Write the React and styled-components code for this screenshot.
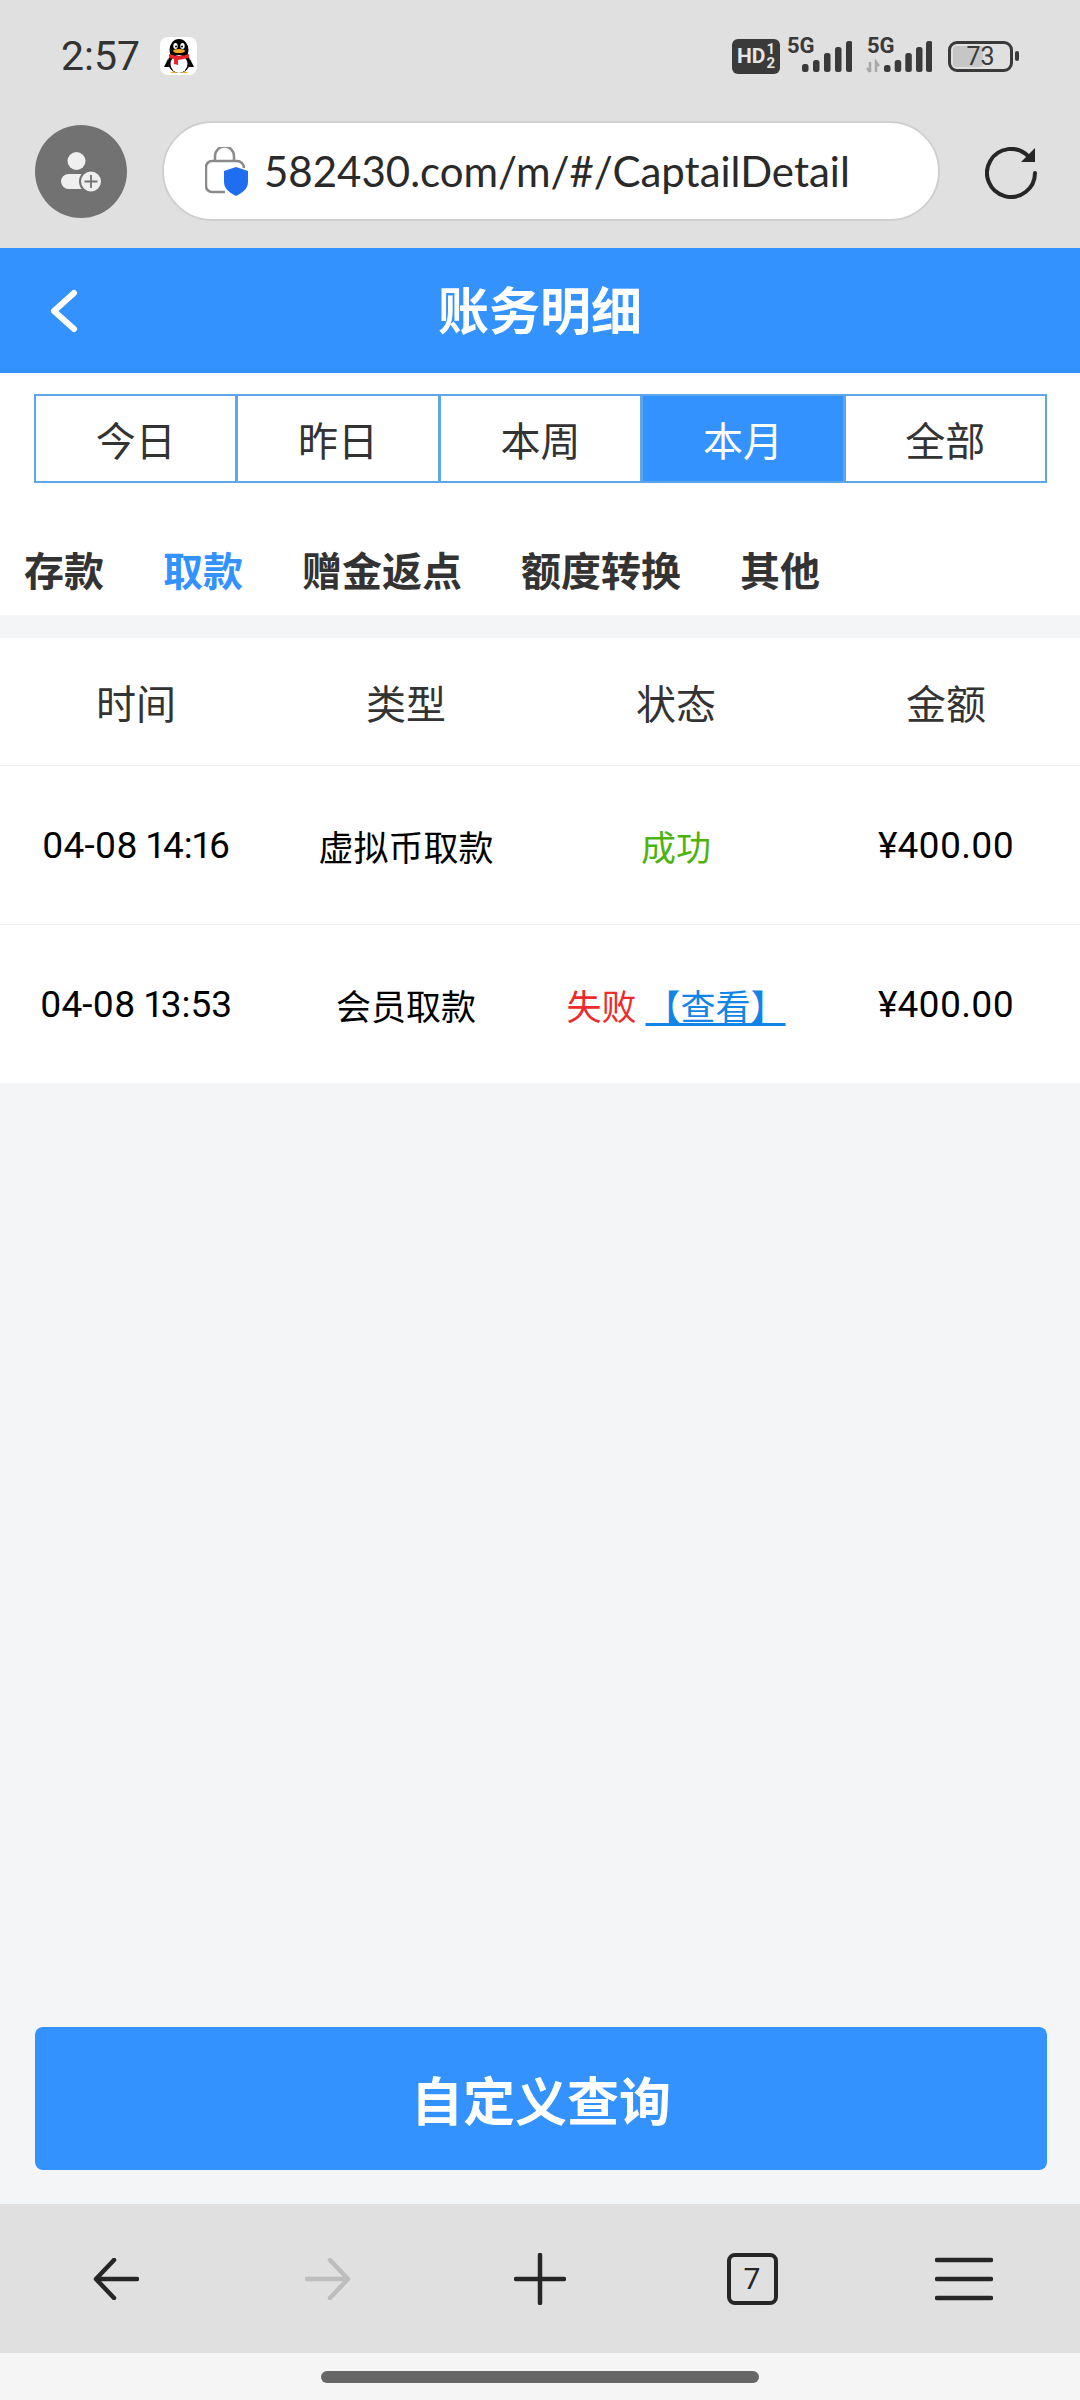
import styled, { createGlobalStyle } from "styled-components";

const GlobalStyle = createGlobalStyle`
  html, body {
    margin: 0;
    padding: 0;
    background: #f4f5f7;
  }
  * {
    box-sizing: border-box;
  }
`;

const FONT = `Roboto, "Noto Sans CJK SC", sans-serif`;

const Page = styled.div`
  width: 1080px;
  height: 2400px;
  display: flex;
  flex-direction: column;
  overflow: hidden;
  background: #f4f5f7;
  font-family: ${FONT};
`;

const StatusBar = styled.div`
  height: 112px;
  flex: none;
  padding: 0 61px;
  background: #e0e0e0;
  display: flex;
  align-items: center;
  justify-content: space-between;
`;

const StatusLeft = styled.div`
  display: flex;
  align-items: center;
  gap: 20px;
`;

const Clock = styled.span`
  font-size: 41px;
  color: #333;
  line-height: 1;
`;

const AppBadge = styled.div`
  width: 37px;
  height: 38px;
  border-radius: 8px;
  background: #fff;
  display: flex;
  align-items: center;
  justify-content: center;
`;

const StatusRight = styled.div`
  display: flex;
  align-items: center;
`;

const HdBadge = styled.div`
  width: 48px;
  height: 35px;
  border-radius: 6px;
  background: #3a3a3a;
  color: #e6e6e6;
  font-weight: 700;
  font-size: 21px;
  display: flex;
  align-items: center;
  justify-content: center;
  gap: 1px;
  margin-right: 6px;
`;

const HdFrac = styled.span`
  display: flex;
  flex-direction: column;
  font-size: 15px;
  line-height: 14px;
  text-align: center;
`;

const SignalSvg = styled.svg`
  margin: 0 ${(p) => p.$gap || 0}px 6px 0;
`;

const Battery = styled.div`
  width: 65px;
  height: 31px;
  margin-left: 16px;
  border: 3px solid #3a3a3a;
  border-radius: 9px;
  position: relative;
  display: flex;
  align-items: center;
  justify-content: center;
  font-size: 25px;
  color: #3a3a3a;

  &::before {
    content: "";
    position: absolute;
    left: 2px;
    top: 2px;
    bottom: 2px;
    width: 30px;
    background: #c6c6c6;
    border-radius: 3px;
  }
`;

const BatteryText = styled.span`
  position: relative;
  line-height: 1;
`;

const BatteryNub = styled.div`
  width: 4px;
  height: 10px;
  margin-left: 2px;
  border-radius: 2px;
  background: #3a3a3a;
`;

const BrowserBar = styled.div`
  height: 136px;
  flex: none;
  padding: 0 43px 26px 35px;
  background: #e0e0e0;
  display: flex;
  align-items: flex-end;
`;

const Avatar = styled.div`
  width: 92px;
  height: 93px;
  margin-bottom: 4px;
  border-radius: 50%;
  background: #727272;
  display: flex;
  align-items: center;
  justify-content: center;
`;

const UrlPill = styled.div`
  width: 778px;
  height: 100px;
  margin: 0 0 1px 35px;
  padding-left: 41px;
  border-radius: 50px;
  background: #fff;
  border: 2px solid #cfcfcf;
  display: flex;
  align-items: center;
  gap: 16px;
`;

const UrlText = styled.span`
  font-family: Lato, sans-serif;
  font-size: 42px;
  color: #2a2a2a;
  white-space: nowrap;
`;

const Reload = styled.div`
  width: 52px;
  height: 52px;
  margin: 0 0 23px 45px;
`;

const Header = styled.div`
  height: 125px;
  flex: none;
  padding: 0 50px 5px;
  background: #3492ff;
  position: relative;
  display: flex;
  align-items: center;
  justify-content: center;
`;

const BackBtn = styled.div`
  position: absolute;
  left: 48px;
  top: 41px;
  width: 32px;
  height: 44px;
`;

const Title = styled.h1`
  margin: 0;
  font-size: 51px;
  font-weight: 700;
  color: #fff;
`;

const Segments = styled.div`
  background: #fff;
  padding: 21px 33px 0 35px;
  flex: none;
  display: grid;
  grid-template-columns: repeat(5, 1fr);
`;

const Segment = styled.div`
  height: 89px;
  display: flex;
  align-items: center;
  justify-content: center;
  font-size: 40px;
  color: ${(p) => (p.$active ? "#fff" : "#333")};
  background: ${(p) => (p.$active ? "#3492ff" : "#fff")};
  border: 2px solid #5fa5ea;
  margin-left: -1px;
`;

const Tabs = styled.div`
  height: 132px;
  flex: none;
  background: #fff;
  padding: 40px 0 0 24px;
  display: flex;
  align-items: center;
  gap: 59px;
`;

const Tab = styled.span`
  font-size: 40px;
  font-weight: 700;
  color: ${(p) => (p.$active ? "#3492ff" : "#333")};
`;

const Table = styled.div`
  margin-top: 23px;
  flex: none;
  background: #fff;
`;

const Row = styled.div`
  height: ${(p) => p.$height}px;
  padding-left: 1px;
  display: grid;
  grid-template-columns: repeat(4, 270px);
  align-items: center;
  justify-items: center;
  border-bottom: ${(p) => (p.$last ? "none" : "1px solid #efefef")};
  font-size: ${(p) => (p.$head ? 40 : 35)}px;
  color: ${(p) => (p.$head ? "#333" : "#000")};
`;

const NumCell = styled.span`
  font-size: 37px;
  font-variant-numeric: proportional-nums;
`;

const Status = styled.span`
  color: ${(p) => p.$color};
`;

const StatusCell = styled.div`
  display: flex;
  align-items: center;
  gap: 9px;
`;

const ViewLink = styled.a`
  color: #1284e6;
  text-decoration: underline;
  text-underline-offset: 3px;
`;

const Spacer = styled.div`
  flex: 1;
`;

const QueryButton = styled.button`
  flex: none;
  height: 143px;
  margin: 0 33px 34px 35px;
  border: none;
  border-radius: 8px;
  background: #3492ff;
  color: #fff;
  font-family: ${FONT};
  font-size: 52px;
  font-weight: 700;
`;

const BottomBar = styled.div`
  height: 149px;
  flex: none;
  background: #e0e0e0;
  display: grid;
  grid-template-columns: 232px 192px 232px 192px 232px;
  align-items: center;
  justify-items: center;
`;

const TabCount = styled.div`
  width: 51px;
  height: 52px;
  border: 4px solid #262626;
  border-radius: 8px;
  display: flex;
  align-items: center;
  justify-content: center;
  font-size: 30px;
  color: #262626;
`;

const HomeArea = styled.div`
  height: 47px;
  flex: none;
  background: #f5f5f5;
  padding-top: 18px;
  display: flex;
  justify-content: center;
`;

const HomePill = styled.div`
  width: 438px;
  height: 12px;
  border-radius: 6px;
  background: #666;
`;

function QQIcon() {
  return (
    <svg width="30" height="35" viewBox="0 0 30 35">
      <ellipse cx="15" cy="11" rx="9.5" ry="11" fill="#000" />
      <ellipse cx="15" cy="23" rx="11" ry="11" fill="#000" />
      <path d="M4 20 L0 28 L5 28Z M26 20 L30 28 L25 28Z" fill="#000" />
      <ellipse cx="15" cy="25" rx="8.5" ry="9" fill="#fff" />
      <ellipse cx="11.5" cy="7" rx="2.2" ry="3" fill="#fff" />
      <ellipse cx="18.5" cy="7" rx="2.2" ry="3" fill="#fff" />
      <circle cx="12" cy="7.5" r="1" fill="#000" />
      <circle cx="18" cy="7.5" r="1" fill="#000" />
      <ellipse cx="15" cy="12" rx="6" ry="2" fill="#f5a623" />
      <path d="M5 15 Q15 19 25 15 L25 19 L14 21 L14 26 L10 25 L10 20 L5 19Z" fill="#e8262a" />
      <path d="M6 34 Q10 31 13 34 Z M17 34 Q21 31 24 34 Z" fill="#f5a623" />
    </svg>
  );
}

const plainBars = [
  [16, 26],
  [27, 22],
  [38, 15],
  [49, 9],
  [60, 3],
];
const arrowBars = [
  [18, 27],
  [28.7, 22],
  [39.3, 15],
  [50, 9],
  [60, 3],
];

function SignalIcon({ arrows, gap }) {
  const bars = arrows ? arrowBars : plainBars;
  return (
    <SignalSvg $gap={gap} width="66" height="42" viewBox="0 -6 66 42">
      <text x="1" y="15" fontFamily="Roboto, sans-serif" fontWeight="700" fontSize="22" fill="#3a3a3a">
        5G
      </text>
      {arrows && (
        <path d="M4 24v10M1 30l3 4M10 34V24l3 4" stroke="#a8a8a8" strokeWidth="2.5" fill="none" />
      )}
      {bars.map(([x, y]) => (
        <rect key={x} x={x} y={y} width="6.5" height={34 - y} rx="2.5" fill="#3a3a3a" />
      ))}
    </SignalSvg>
  );
}

function AddUserIcon() {
  return (
    <svg width="41" height="40" viewBox="0 0 41 40">
      <circle cx="15.5" cy="9" r="9" fill="#efefef" />
      <rect x="0" y="22" width="28" height="15" rx="7.5" fill="#efefef" />
      <circle cx="30" cy="29.5" r="12" fill="#727272" />
      <circle cx="30" cy="29.5" r="10" fill="#efefef" />
      <path d="M30 23v13M23.5 29.5h13" stroke="#727272" strokeWidth="1.8" />
    </svg>
  );
}

function LockIcon() {
  return (
    <svg width="43" height="49" viewBox="0 0 43 49">
      <path d="M10 14V9a9.5 9.5 0 0 1 19 0v5" fill="none" stroke="#8a8a8a" strokeWidth="2.5" />
      <path
        d="M20 45H7a6 6 0 0 1-6-6V20a6 6 0 0 1 6-6h25a7 7 0 0 1 7 7"
        fill="none"
        stroke="#8a8a8a"
        strokeWidth="2.5"
      />
      <path d="M31 20l12 4v11c0 7-6 11-12 14-6-3-12-7-12-14V24z" fill="#1f6ef0" />
    </svg>
  );
}

function ReloadIcon() {
  return (
    <svg width="52" height="52" viewBox="0 0 52 52">
      <path d="M43 9A24 24 0 1 0 50 26" fill="none" stroke="#262626" strokeWidth="4" strokeLinecap="round" />
      <path d="M50 1v14H36z" fill="#262626" />
    </svg>
  );
}

function BackChevron() {
  return (
    <svg width="32" height="44" viewBox="0 0 32 44">
      <path d="M26 4L6 22l20 18" fill="none" stroke="#fff" strokeWidth="6" strokeLinecap="round" strokeLinejoin="round" />
    </svg>
  );
}

const NavSvg = styled.svg`
  transform: ${(p) => (p.$flip ? "scaleX(-1)" : "none")};
`;

function NavArrow({ color, flip }) {
  return (
    <NavSvg $flip={flip} width="46" height="42" viewBox="0 0 46 42">
      <path
        d="M21 2L3 21l18 19M3 21h41"
        fill="none"
        stroke={color}
        strokeWidth="4.5"
        strokeLinecap="round"
        strokeLinejoin="round"
      />
    </NavSvg>
  );
}

function PlusIcon() {
  return (
    <svg width="52" height="52" viewBox="0 0 52 52">
      <path d="M26 2v48M2 26h48" stroke="#262626" strokeWidth="4.5" strokeLinecap="round" />
    </svg>
  );
}

function MenuIcon() {
  return (
    <svg width="58" height="44" viewBox="0 0 58 44">
      <path d="M2 3h54M2 22h54M2 41h54" stroke="#262626" strokeWidth="4.5" strokeLinecap="round" />
    </svg>
  );
}

const ranges = ["今日", "昨日", "本周", "本月", "全部"];
const tabs = ["存款", "取款", "赠金返点", "额度转换", "其他"];

export default function App() {
  return (
    <Page>
      <GlobalStyle />
      <StatusBar>
        <StatusLeft>
          <Clock>2:57</Clock>
          <AppBadge>
            <QQIcon />
          </AppBadge>
        </StatusLeft>
        <StatusRight>
          <HdBadge>
            HD
            <HdFrac>
              <span>1</span>
              <span>2</span>
            </HdFrac>
          </HdBadge>
          <SignalIcon gap={14} />
          <SignalIcon arrows />
          <Battery>
            <BatteryText>73</BatteryText>
          </Battery>
          <BatteryNub />
        </StatusRight>
      </StatusBar>

      <BrowserBar>
        <Avatar>
          <AddUserIcon />
        </Avatar>
        <UrlPill>
          <LockIcon />
          <UrlText>582430.com/m/#/CaptailDetail</UrlText>
        </UrlPill>
        <Reload>
          <ReloadIcon />
        </Reload>
      </BrowserBar>

      <Header>
        <BackBtn>
          <BackChevron />
        </BackBtn>
        <Title>账务明细</Title>
      </Header>

      <Segments>
        {ranges.map((r) => (
          <Segment key={r} $active={r === "本月"}>
            {r}
          </Segment>
        ))}
      </Segments>

      <Tabs>
        {tabs.map((t) => (
          <Tab key={t} $active={t === "取款"}>
            {t}
          </Tab>
        ))}
      </Tabs>

      <Table>
        <Row $head $height={128}>
          <span>时间</span>
          <span>类型</span>
          <span>状态</span>
          <span>金额</span>
        </Row>
        <Row $height={159}>
          <NumCell>04-08 14:16</NumCell>
          <span>虚拟币取款</span>
          <Status $color="#4fb30f">成功</Status>
          <NumCell>¥400.00</NumCell>
        </Row>
        <Row $height={158} $last>
          <NumCell>04-08 13:53</NumCell>
          <span>会员取款</span>
          <StatusCell>
            <Status $color="#ee2a2a">失败</Status>
            <ViewLink>【查看】</ViewLink>
          </StatusCell>
          <NumCell>¥400.00</NumCell>
        </Row>
      </Table>

      <Spacer />
      <QueryButton>自定义查询</QueryButton>

      <BottomBar>
        <NavArrow color="#262626" />
        <NavArrow color="#bdbdbd" flip />
        <PlusIcon />
        <TabCount>7</TabCount>
        <MenuIcon />
      </BottomBar>
      <HomeArea>
        <HomePill />
      </HomeArea>
    </Page>
  );
}
